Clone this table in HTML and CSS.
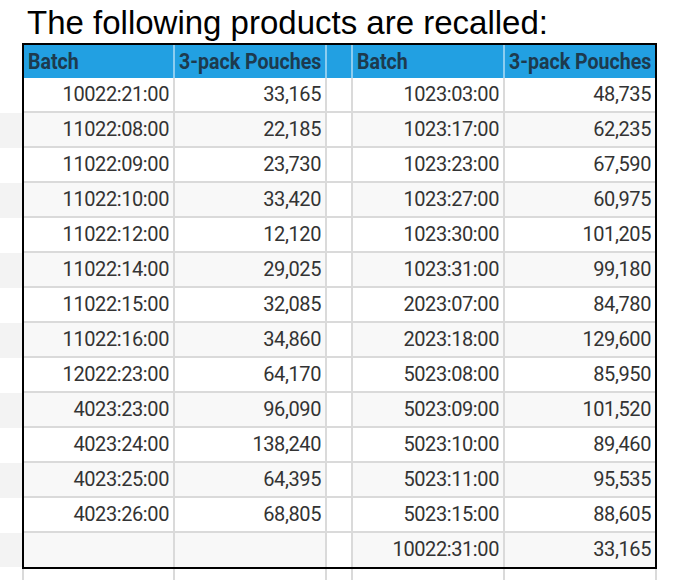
FILE: index.html
```html
<!DOCTYPE html>
<html>
<head>
<meta charset="utf-8">
<link rel="stylesheet" href="styles.css">
</head>
<body>
<div class="title">The following products are recalled:</div>
<div class="sheet">
  <div class="gutter">
    <div class="g"></div><div class="g alt"></div><div class="g"></div><div class="g alt"></div>
    <div class="g"></div><div class="g alt"></div><div class="g"></div><div class="g alt"></div>
    <div class="g"></div><div class="g alt"></div><div class="g"></div><div class="g alt"></div>
    <div class="g"></div><div class="g alt last"></div>
  </div>
  <div class="table">
    <div class="hd"><span>Batch</span></div><div class="hd"><span>3-pack Pouches</span></div><div class="hd sp"></div><div class="hd"><span>Batch</span></div><div class="hd"><span>3-pack Pouches</span></div>

    <div class="c">10022:21:00</div><div class="c">33,165</div><div class="c sp"></div><div class="c">1023:03:00</div><div class="c">48,735</div>
    <div class="c alt">11022:08:00</div><div class="c alt">22,185</div><div class="c sp"></div><div class="c alt">1023:17:00</div><div class="c alt">62,235</div>
    <div class="c">11022:09:00</div><div class="c">23,730</div><div class="c sp"></div><div class="c">1023:23:00</div><div class="c">67,590</div>
    <div class="c alt">11022:10:00</div><div class="c alt">33,420</div><div class="c sp"></div><div class="c alt">1023:27:00</div><div class="c alt">60,975</div>
    <div class="c">11022:12:00</div><div class="c">12,120</div><div class="c sp"></div><div class="c">1023:30:00</div><div class="c">101,205</div>
    <div class="c alt">11022:14:00</div><div class="c alt">29,025</div><div class="c sp"></div><div class="c alt">1023:31:00</div><div class="c alt">99,180</div>
    <div class="c">11022:15:00</div><div class="c">32,085</div><div class="c sp"></div><div class="c">2023:07:00</div><div class="c">84,780</div>
    <div class="c alt">11022:16:00</div><div class="c alt">34,860</div><div class="c sp"></div><div class="c alt">2023:18:00</div><div class="c alt">129,600</div>
    <div class="c">12022:23:00</div><div class="c">64,170</div><div class="c sp"></div><div class="c">5023:08:00</div><div class="c">85,950</div>
    <div class="c alt">4023:23:00</div><div class="c alt">96,090</div><div class="c sp"></div><div class="c alt">5023:09:00</div><div class="c alt">101,520</div>
    <div class="c">4023:24:00</div><div class="c">138,240</div><div class="c sp"></div><div class="c">5023:10:00</div><div class="c">89,460</div>
    <div class="c alt">4023:25:00</div><div class="c alt">64,395</div><div class="c sp"></div><div class="c alt">5023:11:00</div><div class="c alt">95,535</div>
    <div class="c">4023:26:00</div><div class="c">68,805</div><div class="c sp"></div><div class="c">5023:15:00</div><div class="c">88,605</div>
    <div class="c alt last"></div><div class="c alt last"></div><div class="c sp last"></div><div class="c alt last">10022:31:00</div><div class="c alt last">33,165</div>
  </div>
</div>
<div class="below">
  <div class="b"></div><div class="b"></div><div class="b"></div><div class="b"></div><div class="b"></div>
</div>
</body>
</html>
```

FILE: styles.css
```css
html, body {
  margin: 0;
  padding: 0;
  background: #ffffff;
}

body {
  width: 678px;
  height: 580px;
  overflow: hidden;
}

.title {
  box-sizing: border-box;
  height: 43px;
  padding: 6px 0 0 27px;
  font-family: "Liberation Sans", Arial, sans-serif;
  font-size: 33px;
  line-height: 1;
  color: #000000;
  white-space: nowrap;
}

.sheet {
  display: flex;
  align-items: flex-start;
}

.gutter {
  width: 22px;
  padding-top: 35px;
  display: flex;
  flex-direction: column;
}

.g {
  height: 35px;
  background: #ffffff;
}

.g.alt {
  background: #f3f3f3;
}

.g.last {
  height: 34px;
}

.table {
  display: grid;
  grid-template-columns: 149px 152px 26px 152px 152px;
  border: 2px solid #000000;
  font-family: Roboto, "Noto Sans", sans-serif;
}

.hd {
  box-sizing: border-box;
  height: 33px;
  background: #22a0e2;
  border-left: 2px solid #8ccdf0;
  padding-left: 4px;
  line-height: 33px;
  font-size: 22px;
  font-weight: 700;
  color: #1d3a4e;
  white-space: nowrap;
  overflow: hidden;
}

.hd:first-child {
  border-left: none;
}

.hd span {
  display: inline-block;
  transform: scaleX(0.89);
  transform-origin: left center;
}

.c {
  box-sizing: border-box;
  height: 35px;
  border-left: 2px solid #dadada;
  border-bottom: 2px solid #dadada;
  padding-right: 4px;
  text-align: right;
  font-size: 20px;
  letter-spacing: -0.4px;
  line-height: 33px;
  color: #333333;
  background: #ffffff;
  white-space: nowrap;
}

.c:nth-child(5n+1) {
  border-left: none;
}

.c.alt {
  background: #f8f8f8;
}

.c.sp {
  background: #ffffff;
}

.c.last {
  height: 34px;
  border-bottom: none;
}

.below {
  display: grid;
  grid-template-columns: 151px 152px 26px 152px 152px 2px;
  margin-left: 22px;
  height: 11px;
}

.b {
  border-left: 2px solid #dadada;
}

.below::after {
  content: "";
  background: #dadada;
}
```
